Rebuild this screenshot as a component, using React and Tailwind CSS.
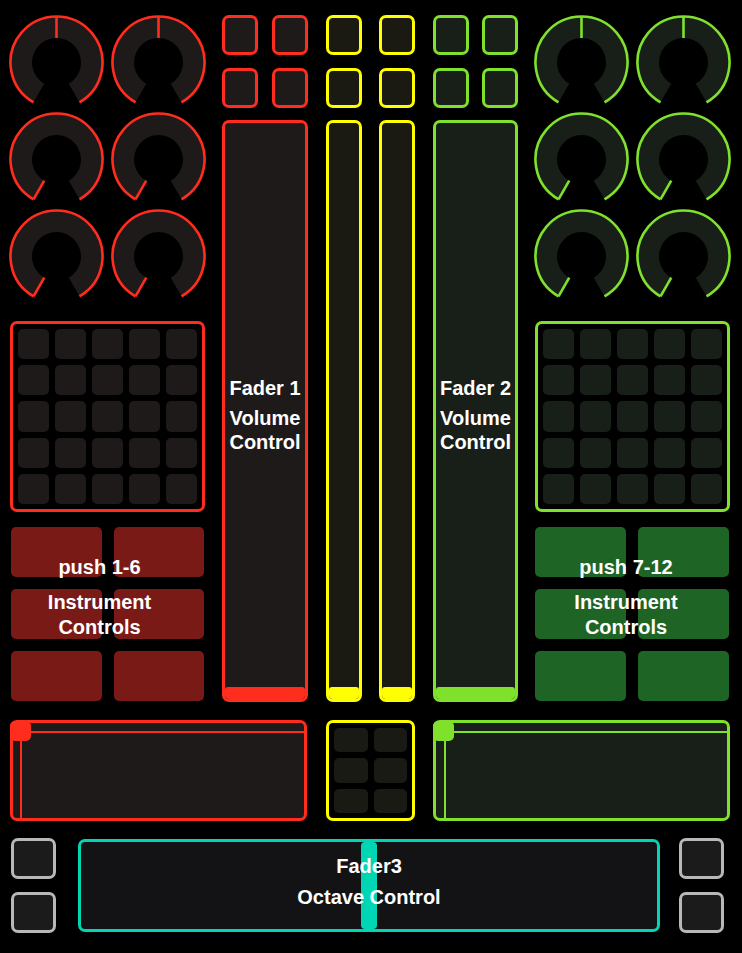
import React from 'react';

// colour sets for each strip of the controller
const themes = {
  red: {
    stroke: '#ff2d1e',
    dark: '#1f1a1a',
    border: 'border-[#ff2d1e]',
    bg: 'bg-[#1f1a1a]',
    fill: 'bg-[#ff2d1e]',
    push: 'bg-[#7a1a17]',
  },
  yellow: {
    stroke: '#ffff00',
    dark: '#1a1a12',
    border: 'border-[#ffff00]',
    bg: 'bg-[#1a1a12]',
    fill: 'bg-[#ffff00]',
    push: 'bg-[#1a1a12]',
  },
  green: {
    stroke: '#7fe12c',
    dark: '#181e18',
    border: 'border-[#7fe12c]',
    bg: 'bg-[#181e18]',
    fill: 'bg-[#7fe12c]',
    push: 'bg-[#1d6425]',
  },
};

const Knob = ({ theme, value }) => {
  const cx = 47.5;
  const cy = 47.5;
  const R = 46;
  const r = 24.5;
  const pt = (rad, deg) => {
    const a = (deg * Math.PI) / 180;
    return `${(cx + rad * Math.sin(a)).toFixed(2)} ${(cy - rad * Math.cos(a)).toFixed(2)}`;
  };
  const ring = `M ${pt(R, -150)} A ${R} ${R} 0 1 1 ${pt(R, 150)} L ${pt(r, 150)} A ${r} ${r} 0 1 0 ${pt(r, -150)} Z`;
  const arc = `M ${pt(R, -150)} A ${R} ${R} 0 1 1 ${pt(R, 150)}`;
  const v = -150 + 300 * value;
  return (
    <svg width="102" height="97" viewBox="0 0 102 97">
      <path d={ring} fill={theme.dark} />
      <path d={arc} fill="none" stroke={theme.stroke} strokeWidth="2.6" />
      <path d={`M ${pt(r, v)} L ${pt(R, v)}`} stroke={theme.stroke} strokeWidth="2.6" />
    </svg>
  );
};

const KnobGrid = ({ theme }) => (
  <div className="grid grid-cols-[102px_102px]">
    {[0.5, 0.5, 0, 0, 0, 0].map((v, i) => (
      <Knob key={i} theme={theme} value={v} />
    ))}
  </div>
);

const PadGrid = ({ theme }) => (
  <div className={`ml-[1px] mt-[15px] w-[195px] h-[191px] border-[3px] ${theme.border} rounded-[7px] p-[5px] grid grid-cols-5 grid-rows-5 gap-x-[6px] gap-y-[6px]`}>
    {Array.from({ length: 25 }).map((_, i) => (
      <div key={i} className={`${theme.bg} rounded-[5px]`} />
    ))}
  </div>
);

const PushGroup = ({ theme, label, className, labelClass }) => (
  <div className={`relative mt-[15px] grid grid-cols-2 grid-rows-[50px_50px_50px] gap-x-[12px] gap-y-[12px] ${className}`}>
    {Array.from({ length: 6 }).map((_, i) => (
      <div key={i} className={`${theme.push} rounded-[5px]`} />
    ))}
    <div className={`absolute top-[28px] left-0 flex flex-col items-center text-white font-bold text-[20px] ${labelClass}`}>
      <span className="leading-[24px]">{label}</span>
      <span className="mt-[11px] leading-[24.5px] text-center">
        Instrument
        <br />
        Controls
      </span>
    </div>
  </div>
);

const SmallButton = ({ theme, className = '' }) => (
  <div className={`w-[36px] h-[40px] border-[3px] ${theme.border} ${theme.bg} rounded-[7px] ${className}`} />
);

const Fader = ({ theme, title, sub, className = '' }) => (
  <div className={`mt-[12px] h-[582px] border-[3px] ${theme.border} ${theme.bg} rounded-[7px] overflow-hidden flex flex-col ${className}`}>
    <div className="flex-1 flex flex-col items-center pt-[253px] text-white font-bold text-[20px] text-center">
      {title && <span className="leading-[24px]">{title}</span>}
      {sub && <span className="mt-[6px] leading-[24px]">{sub}</span>}
    </div>
    <div className={`h-[12px] ${theme.fill} rounded-t-[3px]`} />
  </div>
);

const XYPad = ({ theme, lineLeft }) => (
  <div className={`relative w-[297px] h-[101px] border-[3px] ${theme.border} ${theme.bg} rounded-[7px]`}>
    <div className={`absolute left-0 right-0 top-[8px] h-[2px] ${theme.fill}`} />
    <div className={`absolute top-0 bottom-0 w-[2px] ${theme.fill} ${lineLeft}`} />
    <div className={`absolute left-[-3px] top-[-2px] w-[21px] h-[20px] rounded-[5px] ${theme.fill}`} />
  </div>
);

const GrayButton = () => (
  <div className="w-[45px] h-[41px] border-[3px] border-[#b8b8b8] bg-[#1b1b1b] rounded-[7px]" />
);

export default function App() {
  const { red, yellow, green } = themes;
  return (
    <div className="w-[742px] h-[953px] bg-black overflow-hidden font-['Liberation_Sans',Arial,sans-serif]">
      {/* main strips */}
      <div className="flex pt-[15px]">
        <div className="ml-[9px] w-[204px] flex flex-col">
          <KnobGrid theme={red} />
          <PadGrid theme={red} />
          <PushGroup theme={red} label="push 1-6" className="ml-[2px] w-[193px]" labelClass="right-[16px]" />
        </div>

        <div className="ml-[9px] w-[296px] flex">
          <div className="w-[86px] flex flex-col">
            <div className="flex justify-between">
              <SmallButton theme={red} />
              <SmallButton theme={red} />
            </div>
            <div className="flex justify-between mt-[13px]">
              <SmallButton theme={red} />
              <SmallButton theme={red} />
            </div>
            <Fader theme={red} title="Fader 1" sub="Volume Control" />
          </div>
          <div className="ml-[18px] w-[36px] flex flex-col">
            <SmallButton theme={yellow} />
            <SmallButton theme={yellow} className="mt-[13px]" />
            <Fader theme={yellow} />
          </div>
          <div className="ml-[17px] w-[36px] flex flex-col">
            <SmallButton theme={yellow} />
            <SmallButton theme={yellow} className="mt-[13px]" />
            <Fader theme={yellow} />
          </div>
          <div className="ml-[18px] w-[85px] flex flex-col">
            <div className="flex justify-between">
              <SmallButton theme={green} />
              <SmallButton theme={green} />
            </div>
            <div className="flex justify-between mt-[13px]">
              <SmallButton theme={green} />
              <SmallButton theme={green} />
            </div>
            <Fader theme={green} title="Fader 2" sub="Volume Control" />
          </div>
        </div>

        <div className="ml-[16px] w-[204px] flex flex-col">
          <KnobGrid theme={green} />
          <PadGrid theme={green} />
          <PushGroup theme={green} label="push 7-12" className="ml-[1px] w-[194px]" labelClass="right-[12px]" />
        </div>
      </div>

      {/* xy pads */}
      <div className="flex pl-[10px] mt-[18px]">
        <XYPad theme={red} lineLeft="left-[7px]" />
        <div className="ml-[19px] w-[89px] h-[101px] border-[3px] border-[#ffff00] rounded-[7px] p-[5px] grid grid-cols-2 grid-rows-3 gap-[6px]">
          {Array.from({ length: 6 }).map((_, i) => (
            <div key={i} className="bg-[#1a1a14] rounded-[5px]" />
          ))}
        </div>
        <div className="ml-[18px]">
          <XYPad theme={green} lineLeft="left-[8px]" />
        </div>
      </div>

      {/* octave fader row */}
      <div className="flex pl-[11px] mt-[17px]">
        <div className="flex flex-col gap-[13px]">
          <GrayButton />
          <GrayButton />
        </div>
        <div className="relative ml-[22px] mt-[1px] w-[582px] h-[93px] border-[3px] border-[#00d6b4] bg-[#131316] rounded-[7px]">
          <div className="absolute top-0 bottom-0 left-1/2 -translate-x-1/2 w-[16px] bg-[#00d6b4] rounded-[4px]" />
          <div className="relative flex flex-col items-center pt-[12px] text-white font-bold text-[20px]">
            <span className="leading-[24px]">Fader3</span>
            <span className="mt-[7px] leading-[24px]">Octave Control</span>
          </div>
        </div>
        <div className="ml-[19px] flex flex-col gap-[13px]">
          <GrayButton />
          <GrayButton />
        </div>
      </div>
    </div>
  );
}
